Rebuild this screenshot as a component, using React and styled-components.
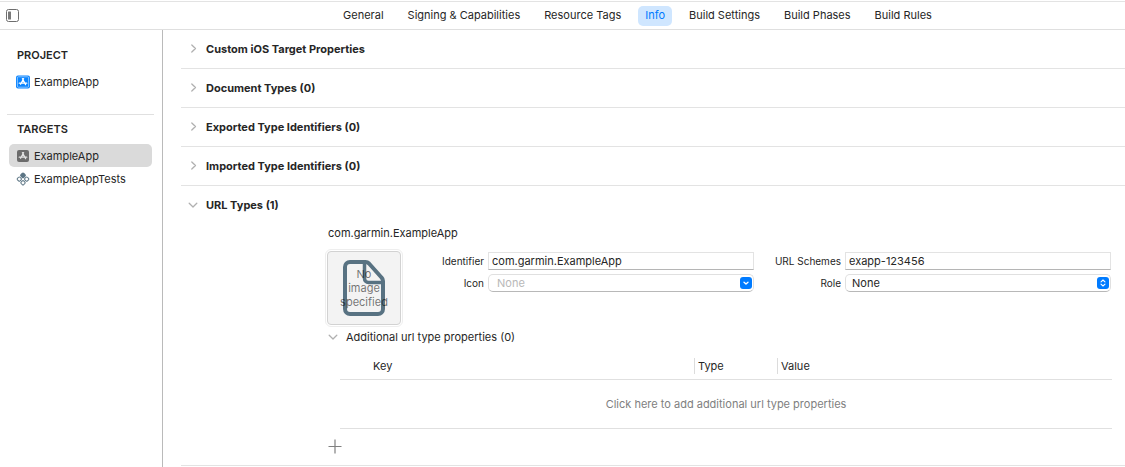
import React from "react";
import styled, { createGlobalStyle, css } from "styled-components";

const GlobalStyle = createGlobalStyle`
  *, *::before, *::after { box-sizing: border-box; }
  body { margin: 0; background: #fff; }
  body, button, input, select {
    font-family: Inter, "Liberation Sans", sans-serif;
    font-size: 11px;
    line-height: 14px;
    color: #262626;
  }
  button { border: 0; padding: 0; background: none; text-align: left; }
`;

const Window = styled.div`
  min-height: 100vh;
  padding-top: 1px;
  display: flex;
  flex-direction: column;
`;

const TopBar = styled.header`
  display: flex;
  align-items: center;
  height: 29px;
  border-top: 1px solid #e3e3e3;
  border-bottom: 1px solid #dfdfdf;
`;

const SidebarToggle = styled.button`
  flex: 0 0 150px;
  padding-left: 6px;
  svg { display: block; }
`;

const Tabs = styled.nav`
  flex: 1;
  display: flex;
  justify-content: center;
  gap: 10px;
`;

const Tab = styled.button`
  height: 20px;
  padding: 0 7px 1px;
  border-radius: 5px;
  white-space: nowrap;
  ${(p) => p.$active && css`
    background: #cfe6ff;
    color: #007aff;
  `}
`;

const Body = styled.div`
  flex: 1;
  display: flex;
`;

const Sidebar = styled.aside`
  flex: 0 0 163px;
  padding-top: 16px;
  border-right: 1px solid #bababa;
`;

const Group = styled.section`
  margin: 0 8px 0 7px;
  padding-bottom: 21px;
  & + & {
    border-top: 1px solid #e0e0e0;
    padding-top: 5px;
  }
`;

const GroupTitle = styled.h2`
  margin: 0;
  padding: 1px 10px 7px;
  font-size: 11px;
  line-height: 16px;
  font-weight: 600;
`;

const Item = styled.button`
  display: flex;
  align-items: center;
  gap: 4px;
  width: calc(100% - 4px);
  height: 23px;
  margin-left: 2px;
  padding-left: 7px;
  border-radius: 5px;
  background: ${(p) => (p.$selected ? "#dadada" : "transparent")};
`;

const Main = styled.main`
  flex: 1;
  min-width: 0;
  padding-left: 18px;
`;

const Section = styled.section`
  border-bottom: 1px solid #e3e3e3;
`;

const Disclosure = styled.button`
  display: flex;
  align-items: center;
  gap: 8px;
  width: 100%;
  height: ${(p) => (p.$minor ? 20 : 38)}px;
  padding-left: ${(p) => (p.$minor ? 3 : 7)}px;
  font-weight: ${(p) => (p.$minor ? 400 : 700)};
`;

const UrlType = styled.div`
  padding: 0 13px 11px 144px;
`;

const UrlTypeName = styled.h3`
  margin: 2px 0 9px;
  padding-left: 3px;
  font-size: 11px;
  line-height: 14px;
  font-weight: 400;
`;

const Form = styled.form`
  display: grid;
  grid-template-columns: 78px 77px 1fr 83px 1fr;
  grid-template-rows: 18px 18px;
  column-gap: 4px;
  row-gap: 4px;
  align-items: center;
  padding: 3px 1px 0 0;
  height: 78px;
`;

const ImageWell = styled.div`
  grid-row: 1 / span 2;
  align-self: start;
  margin-top: -3px;
  height: 78px;
  padding: 1px;
  border: 1px solid #eee;
  border-radius: 6px;
`;

const WellFace = styled.div`
  display: grid;
  place-items: center;
  height: 100%;
  border: 1px solid #d2d2d2;
  border-radius: 4px;
  background: #f3f3f3;
  > * { grid-area: 1 / 1; }
`;

const WellText = styled.span`
  width: min-content;
  text-align: center;
  color: rgba(0, 0, 0, 0.55);
`;

const Label = styled.label`
  font-size: 10px;
  text-align: right;
  white-space: nowrap;
`;

const TextField = styled.input`
  width: 100%;
  min-width: 0;
  height: 18px;
  padding: 0 3px;
  border: 1px solid #e3e3e3;
  border-bottom-color: #b5b5b5;
  outline: 0;
`;

const Picker = styled.div`
  display: flex;
  align-items: center;
  height: 18px;
  padding-right: 1px;
  border: 1px solid #e0e0e0;
  border-bottom-color: #b8b8b8;
  border-radius: 5px;
  input, select {
    flex: 1;
    min-width: 0;
    width: 100%;
    height: 16px;
    padding: 0 0 0 8px;
    border: 0;
    outline: 0;
    background: transparent;
    appearance: none;
  }
  select { padding-left: 6px; }
  input::placeholder { color: #b8b8b8; opacity: 1; }
`;

const PickerBadge = styled.span`
  flex: none;
  display: grid;
  place-items: center;
  width: 12px;
  height: 12px;
  border-radius: 3px;
  background: #007bff;
`;

const Table = styled.table`
  width: calc(100% - 15px);
  margin: 6px 0 0 15px;
  border-collapse: collapse;
  table-layout: fixed;
  thead tr, tbody tr { border-bottom: 1px solid #e0e0e0; }
`;

const HeadCell = styled.th`
  width: ${(p) => p.$width || "auto"};
  height: 26px;
  padding: 0;
  text-align: left;
  font-weight: 400;
  span {
    display: block;
    line-height: 16px;
    padding-left: ${(p) => (p.$first ? 33 : 3)}px;
    border-left: ${(p) => (p.$first ? 0 : 1)}px solid #dcdcdc;
  }
`;

const EmptyCell = styled.td`
  height: 49px;
  padding: 0;
  text-align: center;
  button { color: #808080; }
`;

const AddButton = styled.button`
  display: block;
  margin: 10px 0 0 3px;
  svg { display: block; }
`;

const Chevron = ({ open }) => (
  <svg width="10" height="10" viewBox="0 0 10 10" fill="none" stroke="#b0b0b0" strokeWidth="1.3" strokeLinecap="round" strokeLinejoin="round" aria-hidden="true">
    <path d={open ? "M1.2 3.3 5 7l3.8-3.7" : "M3.8 1 7.5 4.5 3.8 8"} />
  </svg>
);

const AppIcon = ({ color, framed }) => (
  <svg width="14" height="14" viewBox="0 0 14 14" fill="none" aria-hidden="true">
    <rect x={framed ? 0 : 1} y={framed ? 0.5 : 1} width={framed ? 14 : 12} height={framed ? 13 : 12} rx="2" fill={color} />
    {framed && <rect x="1.4" y="1.8" width="11.2" height="10.4" rx="1" stroke="#b7dcff" strokeWidth=".7" />}
    <path d="M7.6 3.6 4.6 9.3M6.4 3.6 9.6 9.6M3.2 8.2h4.6M9.2 8.2h1.6" stroke="#fff" strokeWidth="1.2" strokeLinecap="round" opacity={framed ? 1 : 0.8} />
  </svg>
);

const TestsIcon = () => (
  <svg width="14" height="14" viewBox="0 0 14 14" fill="none" stroke="#5d7685" strokeWidth="1" strokeLinejoin="round" aria-hidden="true">
    <rect x="5.2" y="1.6" width="3.6" height="3.6" rx="1" transform="rotate(45 7 3.4)" fill="#5d7685" strokeWidth="1.4" />
    <rect x="1.5" y="5.3" width="3.6" height="3.6" rx="1" transform="rotate(45 3.3 7.1)" />
    <rect x="8.9" y="5.3" width="3.6" height="3.6" rx="1" transform="rotate(45 10.7 7.1)" />
    <rect x="5.2" y="9" width="3.6" height="3.6" rx="1" transform="rotate(45 7 10.8)" />
  </svg>
);

const DocumentIcon = () => (
  <svg width="42" height="56" viewBox="0 0 42 56" fill="none" stroke="#587282" strokeWidth="4" strokeLinejoin="round" aria-hidden="true">
    <path d="M7 2h15.500a5 5 0 0 1 3.500 1.500L38.500 17.500A5 5 0 0 1 40 21v28a5 5 0 0 1-5 5H7a5 5 0 0 1-5-5V7a5 5 0 0 1 5-5Z" />
    <path d="M21.500 3v15.500a4 4 0 0 0 4 4H39" strokeWidth="3.500" />
  </svg>
);

const tabs = ["General", "Signing & Capabilities", "Resource Tags", "Info", "Build Settings", "Build Phases", "Build Rules"];
const collapsed = [
  "Custom iOS Target Properties",
  "Document Types (0)",
  "Exported Type Identifiers (0)",
  "Imported Type Identifiers (0)",
];

export default function App() {
  return (
    <Window>
      <GlobalStyle />
      <TopBar>
        <SidebarToggle aria-label="Toggle sidebar">
          <svg width="13" height="13" viewBox="0 0 13 13" fill="none">
            <rect x=".5" y=".5" width="12" height="12" rx="2" stroke="#6e6e6e" />
            <rect x="2" y="2.5" width="3" height="8" rx=".5" fill="#7a7a7a" />
          </svg>
        </SidebarToggle>
        <Tabs>
          {tabs.map((t) => (
            <Tab key={t} $active={t === "Info"}>{t}</Tab>
          ))}
        </Tabs>
      </TopBar>
      <Body>
        <Sidebar>
          <Group>
            <GroupTitle>PROJECT</GroupTitle>
            <Item><AppIcon color="#0a84ff" framed />ExampleApp</Item>
          </Group>
          <Group>
            <GroupTitle>TARGETS</GroupTitle>
            <Item $selected><AppIcon color="#6b6b6b" />ExampleApp</Item>
            <Item><TestsIcon />ExampleAppTests</Item>
          </Group>
        </Sidebar>
        <Main>
          {collapsed.map((title) => (
            <Section key={title}>
              <Disclosure aria-expanded="false"><Chevron />{title}</Disclosure>
            </Section>
          ))}
          <Section>
            <Disclosure aria-expanded="true"><Chevron open />URL Types (1)</Disclosure>
            <UrlType>
              <UrlTypeName>com.garmin.ExampleApp</UrlTypeName>
              <Form>
                <ImageWell>
                  <WellFace>
                    <DocumentIcon />
                    <WellText>No image specified</WellText>
                  </WellFace>
                </ImageWell>
                <Label htmlFor="identifier">Identifier</Label>
                <TextField id="identifier" defaultValue="com.garmin.ExampleApp" />
                <Label htmlFor="schemes">URL Schemes</Label>
                <TextField id="schemes" defaultValue="exapp-123456" />
                <Label htmlFor="icon">Icon</Label>
                <Picker>
                  <input id="icon" placeholder="None" />
                  <PickerBadge as="button" type="button" aria-label="Show icons">
                    <svg width="8" height="8" viewBox="0 0 8 8" fill="none" stroke="#fff" strokeWidth="1.3" strokeLinecap="round" strokeLinejoin="round">
                      <path d="M2 3.2 4 5l2-1.8" />
                    </svg>
                  </PickerBadge>
                </Picker>
                <Label htmlFor="role">Role</Label>
                <Picker>
                  <select id="role" defaultValue="None">
                    <option>None</option>
                    <option>Editor</option>
                    <option>Viewer</option>
                  </select>
                  <PickerBadge aria-hidden="true">
                    <svg width="8" height="10" viewBox="0 0 8 10" fill="none" stroke="#fff" strokeWidth="1.1" strokeLinecap="round" strokeLinejoin="round">
                      <path d="M2 3.8 4 2l2 1.8M2 6.2 4 8l2-1.8" />
                    </svg>
                  </PickerBadge>
                </Picker>
              </Form>
              <Disclosure $minor aria-expanded="true"><Chevron open />Additional url type properties (0)</Disclosure>
              <Table>
                <thead>
                  <tr>
                    <HeadCell $first><span>Key</span></HeadCell>
                    <HeadCell $width="83px"><span>Type</span></HeadCell>
                    <HeadCell $width="335px"><span>Value</span></HeadCell>
                  </tr>
                </thead>
                <tbody>
                  <tr>
                    <EmptyCell colSpan={3}>
                      <button>Click here to add additional url type properties</button>
                    </EmptyCell>
                  </tr>
                </tbody>
              </Table>
              <AddButton aria-label="Add URL type">
                <svg width="14" height="15" viewBox="0 0 14 15" stroke="#808080" strokeWidth="1.2">
                  <path d="M7 .5v14M.5 7.5h13" />
                </svg>
              </AddButton>
            </UrlType>
          </Section>
        </Main>
      </Body>
    </Window>
  );
}
